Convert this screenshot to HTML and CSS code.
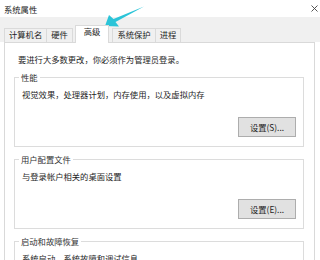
FILE: index.html
```html
<!DOCTYPE html>
<html lang="zh-CN">
<head>
  <meta charset="UTF-8">
  <title>系统属性</title>
  <link rel="stylesheet" href="styles.css">
</head>
<body>
  <div class="titlebar">
    <span class="title">系统属性</span>
    <svg class="close" width="7" height="7" viewBox="0 0 7 7">
      <path d="M0.5 0.5 L6.5 6.5 M6.5 0.5 L0.5 6.5" stroke="#444" stroke-width="0.9" fill="none"/>
    </svg>
  </div>
  <div class="tabs">
    <div class="tab">计算机名</div>
    <div class="tab">硬件</div>
    <div class="tab active">高级</div>
    <div class="tab">系统保护</div>
    <div class="tab">进程</div>
  </div>
  <div class="panel">
    <p class="note">要进行大多数更改，你必须作为管理员登录。</p>
    <fieldset class="group">
      <legend>性能</legend>
      <p>视觉效果，处理器计划，内存使用，以及虚拟内存</p>
      <div class="actions"><button>设置(S)...</button></div>
    </fieldset>
    <fieldset class="group">
      <legend>用户配置文件</legend>
      <p>与登录帐户相关的桌面设置</p>
      <div class="actions"><button>设置(E)...</button></div>
    </fieldset>
    <fieldset class="group">
      <legend>启动和故障恢复</legend>
      <p>系统启动、系统故障和调试信息</p>
      <div class="actions"><button>设置(T)...</button></div>
    </fieldset>
  </div>
  <!-- annotation arrow pointing at the 高级 tab -->
  <svg class="arrow" width="150" height="32" viewBox="0 0 150 32">
    <path d="M105 26 L109 15 L113.5 19 L144 6.5 L115.5 22 L119 26.5 Z" fill="#2bc4d8"/>
  </svg>
</body>
</html>
```

FILE: styles.css
```css
body {
  font-family: "Noto Sans CJK SC", "Noto Sans", sans-serif;
  font-size: 8.3px;
  color: #1e1e1e;
  background: #fff;
  margin: 0;
  width: 320px;
  height: 260px;
  overflow: hidden;
  position: relative;
}
.titlebar {
  height: 17px;
  display: flex;
  align-items: center;
  justify-content: space-between;
  padding: 0 2px 0 4px;
}
.title {
  line-height: 12px;
  color: #222;
}
.tabs {
  background: #f0f0f0;
  height: 25px;
  display: flex;
  align-items: flex-end;
  padding-left: 4px;
}
.tab {
  box-sizing: border-box;
  height: 14px;
  line-height: 10px;
  padding: 0 4px;
  border: 1px solid #dadada;
  border-bottom: none;
  margin-right: -1px;
  white-space: nowrap;
}
.tab.active {
  position: relative;
  z-index: 1;
  height: 18px;
  margin: 0 3px -1px 3px;
  padding: 0 8px;
  background: #fff;
}
.panel {
  box-sizing: border-box;
  width: 311px;
  height: 240px;
  margin-left: 4px;
  border: 1px solid #d9d9d9;
  padding: 10px 10px 0 9px;
}
.note {
  margin: 0 0 4px;
  padding-left: 4px;
  line-height: 12px;
}
.group {
  margin: 6px 0 0;
  padding: 0 7px 9px 4px;
  border: 1px solid #dcdcdc;
}
.group legend {
  padding: 0 2px;
  line-height: 12px;
  color: #333;
}
.group p {
  margin: 5px 0 0;
  padding-left: 3px;
  line-height: 12px;
}
.actions {
  display: flex;
  justify-content: flex-end;
  margin-top: 17px;
}
button {
  width: 58px;
  height: 20px;
  padding: 0;
  font-family: inherit;
  font-size: 8.3px;
  color: #1e1e1e;
  background: #e1e1e1;
  border: 1px solid #adadad;
}
.arrow {
  position: absolute;
  top: 0;
  left: 0;
  pointer-events: none;
}
```
